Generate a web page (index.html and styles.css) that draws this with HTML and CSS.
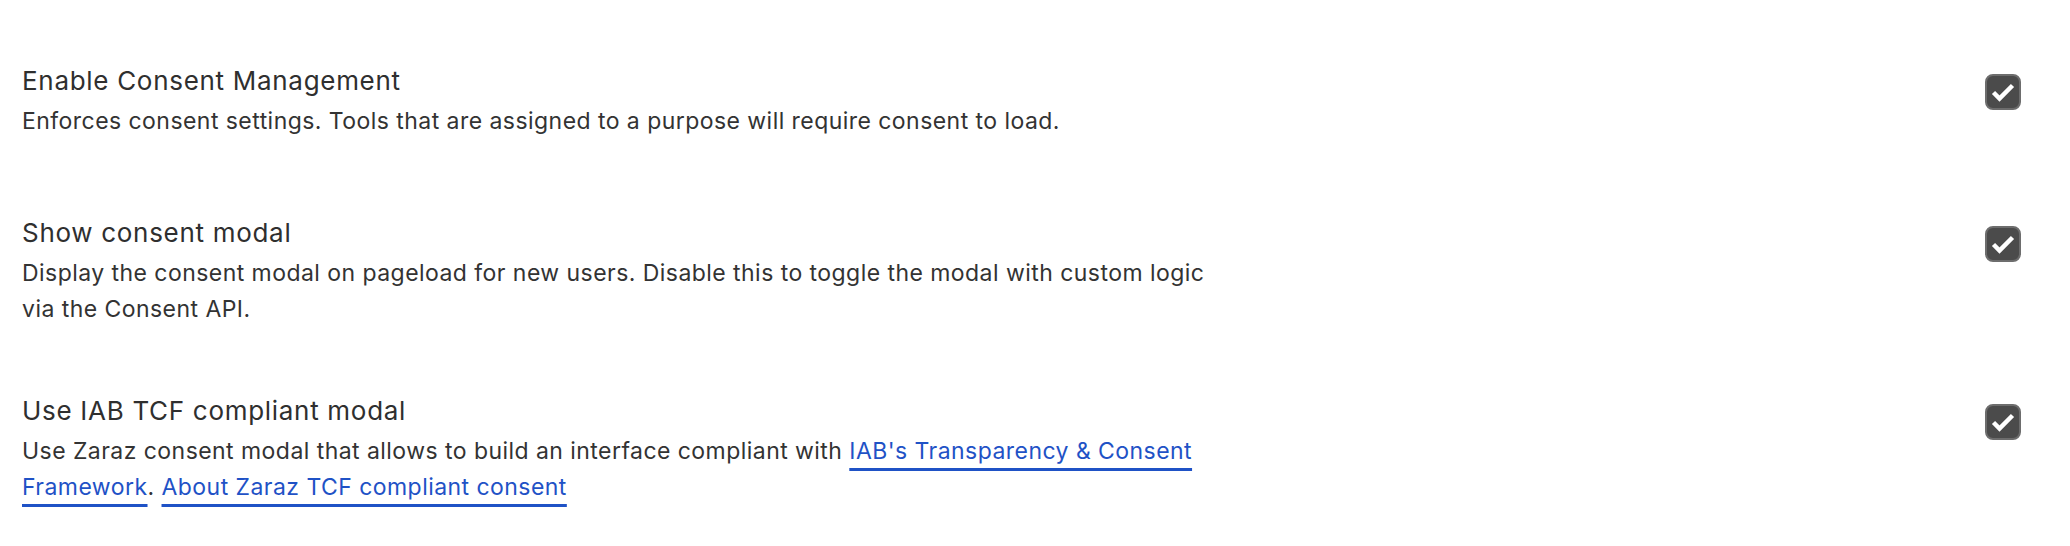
FILE: index.html
```html
<!DOCTYPE html>
<html lang="en">
<head>
<meta charset="utf-8">
<title>Consent settings</title>
<link rel="stylesheet" href="styles.css">
</head>
<body>
<main class="settings">
  <section class="row">
    <div class="text">
      <h3 class="title">Enable Consent Management</h3>
      <p class="desc">Enforces consent settings. Tools that are assigned to a purpose will require consent to load.</p>
    </div>
    <label class="check">
      <svg width="36" height="36" viewBox="0 0 36 36" aria-hidden="true">
        <rect x="1" y="1" width="34" height="34" rx="7" fill="#4b4b4b" stroke="#6d6d6d" stroke-width="2"/>
        <polyline points="8.5,18.5 14.5,24.5 27.5,11.5" fill="none" stroke="#fff" stroke-width="4.5"/>
      </svg>
    </label>
  </section>
  <section class="row">
    <div class="text">
      <h3 class="title">Show consent modal</h3>
      <p class="desc">Display the consent modal on pageload for new users. Disable this to toggle the modal with custom logic via the Consent API.</p>
    </div>
    <label class="check">
      <svg width="36" height="36" viewBox="0 0 36 36" aria-hidden="true">
        <rect x="1" y="1" width="34" height="34" rx="7" fill="#4b4b4b" stroke="#6d6d6d" stroke-width="2"/>
        <polyline points="8.5,18.5 14.5,24.5 27.5,11.5" fill="none" stroke="#fff" stroke-width="4.5"/>
      </svg>
    </label>
  </section>
  <section class="row">
    <div class="text">
      <h3 class="title">Use IAB TCF compliant modal</h3>
      <p class="desc">Use Zaraz consent modal that allows to build an interface compliant with <a class="link" href="#">IAB's Transparency &amp; Consent Framework</a>. <a class="link" href="#">About Zaraz TCF compliant consent</a></p>
    </div>
    <label class="check">
      <svg width="36" height="36" viewBox="0 0 36 36" aria-hidden="true">
        <rect x="1" y="1" width="34" height="34" rx="7" fill="#4b4b4b" stroke="#6d6d6d" stroke-width="2"/>
        <polyline points="8.5,18.5 14.5,24.5 27.5,11.5" fill="none" stroke="#fff" stroke-width="4.5"/>
      </svg>
    </label>
  </section>
</main>
</body>
</html>
```
FILE: styles.css
```css
* { box-sizing: border-box; }

html, body {
  margin: 0;
  background: #ffffff;
}

body {
  font-family: Inter, "Noto Sans", "Liberation Sans", sans-serif;
  color: #313131;
}

.settings {
  padding-top: 30px;
}

.row {
  display: flex;
  justify-content: space-between;
  align-items: flex-start;
  padding: 35px 49px 33px 22px;
}

.text {
  min-height: 84px;
  max-width: 1210px;
}

.title {
  margin: 0 0 6px 0;
  font-size: 26px;
  line-height: 32px;
  font-weight: 400;
  letter-spacing: 0.7px;
  color: #2f2f2f;
}

.desc {
  margin: 0;
  font-size: 23px;
  line-height: 36px;
  letter-spacing: 0.45px;
  color: #333333;
}

.link {
  color: #1f52c6;
  text-decoration: underline;
  text-decoration-color: #1f52c6;
  text-decoration-thickness: 3px;
  text-underline-offset: 9px;
}

.check {
  display: block;
  width: 36px;
  height: 36px;
  margin-top: 9px;
  flex: none;
}

.check svg {
  display: block;
}
```
